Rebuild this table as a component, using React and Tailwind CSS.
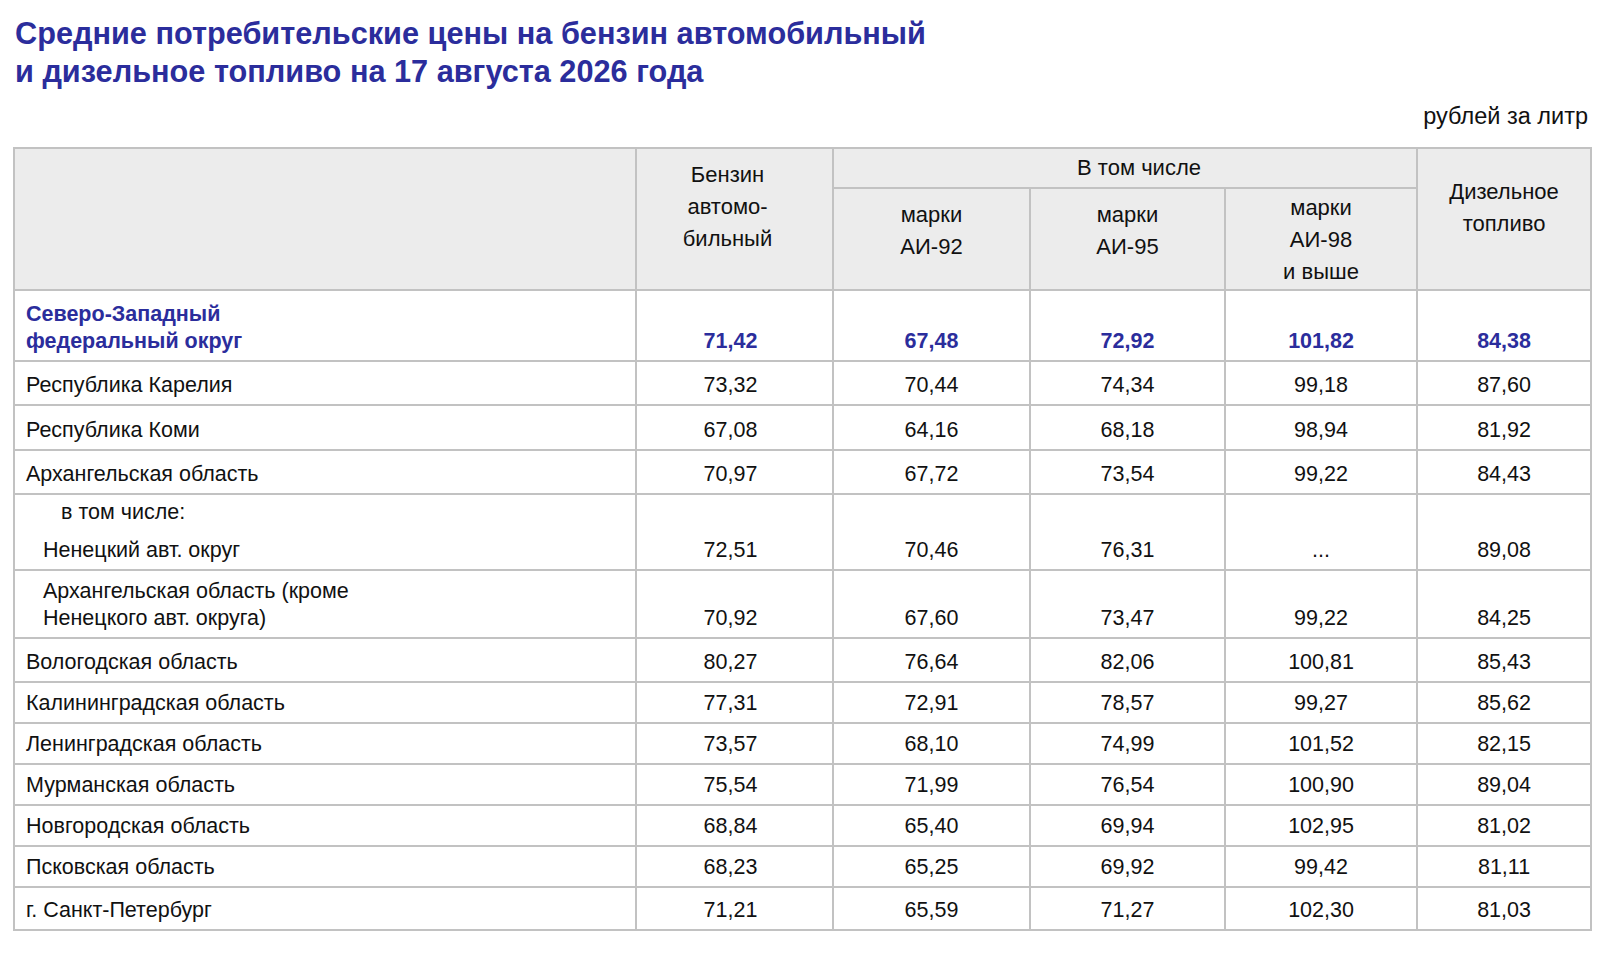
import React from 'react';

const BLUE = 'text-[#2b2d9c]';

const rows = [
  { name: ['Северо-Западный', 'федеральный округ'], vals: ['71,42', '67,48', '72,92', '101,82', '84,38'], total: true, h: 'h-[71px]' },
  { name: ['Республика Карелия'], vals: ['73,32', '70,44', '74,34', '99,18', '87,60'], h: 'h-[44px]' },
  { name: ['Республика Коми'], vals: ['67,08', '64,16', '68,18', '98,94', '81,92'], h: 'h-[45px]' },
  { name: ['Архангельская область'], vals: ['70,97', '67,72', '73,54', '99,22', '84,43'], h: 'h-[44px]' },
  { name: ['Ненецкий авт. округ'], vals: ['72,51', '70,46', '76,31', '...', '89,08'], sub: true, incl: true, h: 'h-[76px]' },
  { name: ['Архангельская область (кроме', 'Ненецкого авт. округа)'], vals: ['70,92', '67,60', '73,47', '99,22', '84,25'], sub: true, h: 'h-[68px]' },
  { name: ['Вологодская область'], vals: ['80,27', '76,64', '82,06', '100,81', '85,43'], h: 'h-[44px]' },
  { name: ['Калининградская область'], vals: ['77,31', '72,91', '78,57', '99,27', '85,62'], h: 'h-[41px]' },
  { name: ['Ленинградская область'], vals: ['73,57', '68,10', '74,99', '101,52', '82,15'], h: 'h-[41px]' },
  { name: ['Мурманская область'], vals: ['75,54', '71,99', '76,54', '100,90', '89,04'], h: 'h-[41px]' },
  { name: ['Новгородская область'], vals: ['68,84', '65,40', '69,94', '102,95', '81,02'], h: 'h-[41px]' },
  { name: ['Псковская область'], vals: ['68,23', '65,25', '69,92', '99,42', '81,11'], h: 'h-[41px]' },
  { name: ['г. Санкт-Петербург'], vals: ['71,21', '65,59', '71,27', '102,30', '81,03'], h: 'h-[43px]' },
];

export default function App() {
  return (
    <div className="min-h-screen bg-white pl-[13px] pr-[20px] pt-[15px] pb-10 text-[#111] font-['Liberation_Sans',Arial,sans-serif]">
      <h1 className={`pl-[2px] text-[30.7px] leading-[38px] font-bold ${BLUE}`}>
        Средние потребительские цены на бензин автомобильный
        <br />
        и дизельное топливо на 17 августа 2026 года
      </h1>

      <div className="mt-[12px] w-[1577px] pr-[2px] text-right text-[23.5px] leading-[27px]">рублей за литр</div>

      <table className="mt-[17px] w-[1577px] table-fixed border-collapse text-[21.5px] leading-[27px]">
        <colgroup>
          <col className="w-[622px]" />
          <col className="w-[197px]" />
          <col className="w-[197px]" />
          <col className="w-[195px]" />
          <col className="w-[192px]" />
          <col className="w-[174px]" />
        </colgroup>
        <thead className="bg-[#ececec] text-center text-[22px] leading-[32px]">
          <tr className="h-[40px]">
            <th rowSpan={2} className="border-2 border-[#c2c2c2]" />
            <th rowSpan={2} className="border-2 border-[#c2c2c2] pt-[10px] pr-[14px] align-top font-normal">
              Бензин
              <br />
              автомо-
              <br />
              бильный
            </th>
            <th colSpan={3} className="border-2 border-[#c2c2c2] pl-[28px] align-middle font-normal">
              В том числе
            </th>
            <th rowSpan={2} className="border-2 border-[#c2c2c2] pt-[27px] align-top font-normal">
              Дизельное
              <br />
              топливо
            </th>
          </tr>
          <tr className="h-[102px]">
            <th className="border-2 border-[#c2c2c2] pt-[10px] align-top font-normal">
              марки
              <br />
              АИ-92
            </th>
            <th className="border-2 border-[#c2c2c2] pt-[10px] align-top font-normal">
              марки
              <br />
              АИ-95
            </th>
            <th className="border-2 border-[#c2c2c2] pt-[3px] align-top font-normal">
              марки
              <br />
              АИ-98
              <br />
              и выше
            </th>
          </tr>
        </thead>
        <tbody>
          {rows.map((r) => (
            <tr key={r.name.join(' ')} className={r.h}>
              <td
                className={`border-2 border-[#c2c2c2] pb-[5px] align-bottom ${r.sub ? 'pl-[28px]' : 'pl-[11px]'} ${r.total ? `font-bold ${BLUE}` : ''}`}
              >
                {r.incl && <div className="mb-[11px] pl-[18px]">в том числе:</div>}
                {r.name.map((line) => (
                  <div key={line}>{line}</div>
                ))}
              </td>
              {r.vals.map((v, i) => (
                <td
                  key={i}
                  className={`border-2 border-[#c2c2c2] pb-[5px] text-center align-bottom ${i === 0 ? 'pr-[8px]' : ''} ${r.total ? `font-bold ${BLUE}` : ''}`}
                >
                  {v}
                </td>
              ))}
            </tr>
          ))}
        </tbody>
      </table>
    </div>
  );
}
